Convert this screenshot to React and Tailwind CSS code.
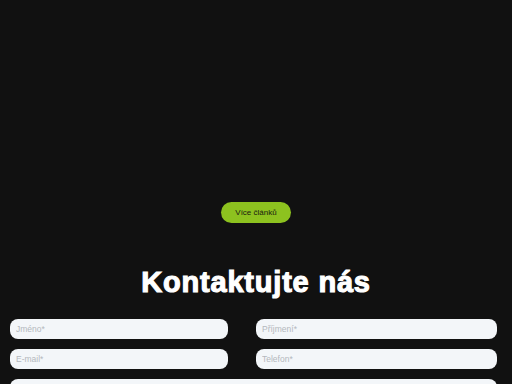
export default function App() {
  const inputCls =
    "h-[20px] w-full rounded-[8px] bg-[#f3f6f9] pl-[6px] pr-[7px] text-[8.5px] text-[#9aa0a6] placeholder:text-[#b3b8bd] outline-none border-0";
  return (
    <div className="w-[512px] h-[384px] overflow-hidden bg-[#111111] font-['Liberation_Sans',Arial,sans-serif]">
      <div className="flex justify-center pt-[202px]">
        <button className="h-[21px] w-[70px] rounded-full bg-[#8dc21f] text-[8px] leading-none text-[#1a2010]">
          Více článků
        </button>
      </div>
      <h2 className="mt-[45px] text-center text-[29px] leading-[29px] font-bold text-white tracking-[0.8px] [-webkit-text-stroke:1.1px_white]">
        Kontaktujte nás
      </h2>
      <div className="mt-[22px] grid grid-cols-[218px_241px] gap-x-[28px] gap-y-[10px] pl-[10px]">
        <input className={inputCls} placeholder="Jméno*" />
        <input className={inputCls} placeholder="Příjmení*" />
        <input className={inputCls} placeholder="E-mail*" />
        <input className={inputCls} placeholder="Telefon*" />
        <textarea className="col-span-2 h-[40px] w-full rounded-[8px] bg-[#f3f6f9] px-[7px] py-[5px] text-[8px] outline-none resize-none" />
      </div>
    </div>
  );
}
